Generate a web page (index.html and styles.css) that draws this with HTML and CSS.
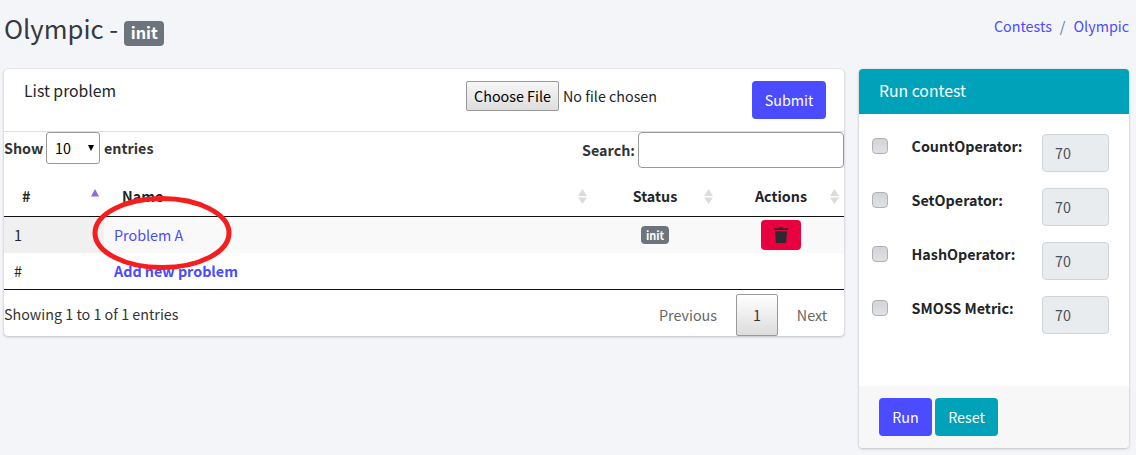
FILE: index.html
```
<!DOCTYPE html>
<html lang="en">
<head>
<meta charset="utf-8">
<title>Olympic</title>
<link rel="stylesheet" href="styles.css">
</head>
<body>
<header class="page-header">
  <h1 class="page-title">Olympic - <span class="badge badge-large">init</span></h1>
  <nav class="breadcrumb"><a href="#">Contests</a><span class="slash">/</span><a href="#">Olympic</a></nav>
</header>
<main class="layout">
  <section class="card problems">
    <div class="card-header">
      <h2 class="card-title">List problem</h2>
      <div class="file"><button class="file-button">Choose File</button><span>No file chosen</span></div>
      <button class="btn btn-primary submit">Submit</button>
    </div>
    <div class="table-tools">
      <div class="length"><span>Show</span>
        <span class="select"><span>10</span><svg width="6" height="6" viewBox="0 0 6 6"><path d="M0 0H6L3 6Z" fill="#000"/></svg></span>
        <span>entries</span></div>
      <label class="search"><span>Search:</span><input type="text"></label>
    </div>
    <table class="table">
      <colgroup><col class="col-id"><col><col class="col-small"><col class="col-small"></colgroup>
      <thead>
        <tr>
          <th><div class="th"><span>#</span><svg class="sort-up" width="8" height="8" viewBox="0 0 8 8"><path d="M4 0L8 7.5H0Z" fill="#8f6be0"/></svg></div></th>
          <th><div class="th"><span>Name</span><svg class="sort" width="9" height="15" viewBox="0 0 9 15"><path d="M4.5 0L9 7H0ZM0 8.500H9L4.500 15Z" fill="#dcdcdc"/></svg></div></th>
          <th><div class="th center"><span>Status</span><svg class="sort" width="9" height="15" viewBox="0 0 9 15"><path d="M4.5 0L9 7H0ZM0 8.500H9L4.500 15Z" fill="#dcdcdc"/></svg></div></th>
          <th><div class="th center"><span>Actions</span><svg class="sort" width="9" height="15" viewBox="0 0 9 15"><path d="M4.5 0L9 7H0ZM0 8.500H9L4.500 15Z" fill="#dcdcdc"/></svg></div></th>
        </tr>
      </thead>
      <tbody>
        <tr class="odd">
          <td class="sorted">1</td>
          <td><a href="#">Problem A</a></td>
          <td><div class="cell-center"><span class="badge">init</span></div></td>
          <td><div class="cell-center"><button class="delete" aria-label="Delete"><svg width="14" height="16" viewBox="0 0 14 16"><path d="M0 1.200H4.500L5.200 0H8.800L9.500 1.200H14V3H0ZM1 4H13L12.200 15Q12.100 16 11.100 16H2.900Q1.900 16 1.800 15Z" fill="#292b30"/></svg></button></div></td>
        </tr>
        <tr>
          <td>#</td>
          <td><a class="strong" href="#">Add new problem</a></td>
          <td></td>
          <td></td>
        </tr>
      </tbody>
    </table>
    <div class="table-footer">
      <span>Showing 1 to 1 of 1 entries</span>
      <div class="pager"><span class="page muted">Previous</span><span class="page current">1</span><span class="page muted next">Next</span></div>
    </div>
    <svg class="marker" width="142" height="76" viewBox="0 0 142 76"><ellipse cx="71" cy="38" rx="67" ry="34.500" fill="none" stroke="#f51d1d" stroke-width="5"/></svg>
  </section>
  <section class="card contest">
    <div class="contest-header">Run contest</div>
    <div class="contest-body">
      <div class="option"><span class="check"></span><span class="name">CountOperator:</span><span class="value">70</span></div>
      <div class="option"><span class="check"></span><span class="name">SetOperator:</span><span class="value">70</span></div>
      <div class="option"><span class="check"></span><span class="name">HashOperator:</span><span class="value">70</span></div>
      <div class="option"><span class="check"></span><span class="name">SMOSS Metric:</span><span class="value">70</span></div>
    </div>
    <div class="contest-footer"><button class="btn btn-primary">Run</button><button class="btn btn-info">Reset</button></div>
  </section>
</main>
</body>
</html>
```
FILE: styles.css
```
* { box-sizing: border-box; }
body {
  margin: 0;
  height: 455px;
  overflow: hidden;
  background: #f4f5f9;
  color: #212529;
  font: 14.32px/24px "Noto Sans CJK SC", "Open Sans", sans-serif;
  white-space: nowrap;
}
button, input { font: inherit; margin: 0; padding: 0; }
a { color: #4b4bff; text-decoration: none; }
.page-header { display: flex; justify-content: space-between; height: 69px; padding: 12px 7px 0 4px; }
.page-title { display: flex; align-items: flex-start; gap: 6px; margin: 0; font-size: 25.7px; font-weight: 400; line-height: 32px; color: #343a40; }
.badge { display: flex; align-items: center; justify-content: center; width: 28px; height: 18px; border-radius: 4px; background: #6c757d; color: #fff; font-size: 10.9px; font-weight: 700; line-height: 16px; padding-bottom: 1px; }
.badge-large { width: 40px; height: 25px; margin-top: 9px; padding-bottom: 3px; font-size: 16.2px; }
.breadcrumb { display: flex; padding-top: 2px; color: #6c757d; }
.slash { margin: 0 8px; }
.layout { display: flex; align-items: flex-start; gap: 15px; padding-left: 4px; }
.card { position: relative; border-radius: 4px; background: #fff; box-shadow: 0 0 1px rgba(0,0,0,.25), 0 1px 3px rgba(0,0,0,.2); }
.problems { width: 840px; height: 267px; }
.contest { width: 270px; height: 379px; overflow: hidden; }
.card-header { display: flex; align-items: flex-start; height: 63px; padding: 12px 18px 0 20px; border-bottom: 1px solid #dfdfdf; }
.card-title { width: 442px; margin: -2px 0 0; font-size: 15.75px; font-weight: 400; }
.file { display: flex; align-items: center; gap: 4px; height: 30px; }
.file-button { width: 93px; height: 30px; border: 1px solid #999; border-radius: 2px; background: linear-gradient(#f6f6f6, #dedede); color: #000; }
.btn { height: 38px; border: 0; border-radius: 4px; color: #fff; }
.btn-primary { width: 53px; background: #4b4bff; }
.btn-info { width: 63px; background: #00a2b9; }
.submit { width: 74px; margin-left: auto; }
.table-tools { display: flex; justify-content: space-between; height: 45px; color: #333; font-weight: 700; }
.length { display: flex; gap: 4px; line-height: 32px; }
.length > span:first-child { width: 38px; }
.select { display: flex; align-items: center; justify-content: space-between; width: 54px; height: 32px; padding: 0 5px 0 8px; border: 1px solid #999; border-radius: 3px; color: #000; font-weight: 400; }
.search { display: flex; gap: 3px; line-height: 36px; }
.search input { width: 206px; height: 36px; border: 1px solid #999; border-radius: 4px; }
.table { width: 840px; table-layout: fixed; border-collapse: separate; border-spacing: 0; border-bottom: 1px solid #111; }
.col-id { width: 100px; }
.col-small { width: 126px; }
th, td { padding: 0; text-align: left; }
th { height: 40px; border-bottom: 1px solid #111; }
.th { display: flex; align-items: center; justify-content: space-between; padding: 0 5px 0 18px; }
.th span { margin-top: -1px; }
.th.center span { flex: 1; padding-left: 9px; text-align: center; }
.th.center { padding-left: 5px; }
.sort-up { margin: -8px 0 0 0; }
td { height: 36px; padding: 0 10px; }
.odd { background: #f9f9f9; }
.sorted { background: #f0f0f0; }
.strong { font-weight: 700; }
.cell-center { display: flex; justify-content: center; }
.delete { display: flex; align-items: center; justify-content: center; width: 40px; height: 30px; border: 0; border-radius: 4px; background: #e9003f; }
.table-footer { display: flex; justify-content: space-between; height: 46px; padding-top: 4px; color: #333; line-height: 41px; }
.table-footer > span { line-height: 40px; }
.pager { display: flex; }
.page { width: 97px; height: 42px; text-align: center; }
.muted { padding-left: 1px; color: #666; }
.current { width: 42px; border: 1px solid #999; border-radius: 2px; background: linear-gradient(#fff, #dcdcdc); line-height: 40px; }
.next { width: 66px; padding-left: 2px; }
.marker { position: absolute; left: 87px; top: 126px; }
.contest-header { height: 45px; padding: 10px 20px; background: #00a2b9; color: #fff; font-size: 15.75px; }
.contest-body { display: flex; flex-direction: column; gap: 16px; height: 272px; padding: 20px 20px 0 13px; }
.option { display: flex; height: 38px; }
.check { width: 16px; height: 16px; margin: 4px 23px 0 0; border: 1px solid #adb1b6; border-radius: 4px; background: linear-gradient(#d2d4d7, #dfe1e4); }
.name { width: 131px; padding-left: 0.5px; font-weight: 700; }
.value { width: 67px; height: 38px; padding-left: 12px; border: 1px solid #ced4da; border-radius: 4px; background: #e9ecef; color: #495057; line-height: 35px; }
.contest-footer { display: flex; gap: 3px; height: 62px; padding: 12px 20px; background: #f7f7f7; }
```
